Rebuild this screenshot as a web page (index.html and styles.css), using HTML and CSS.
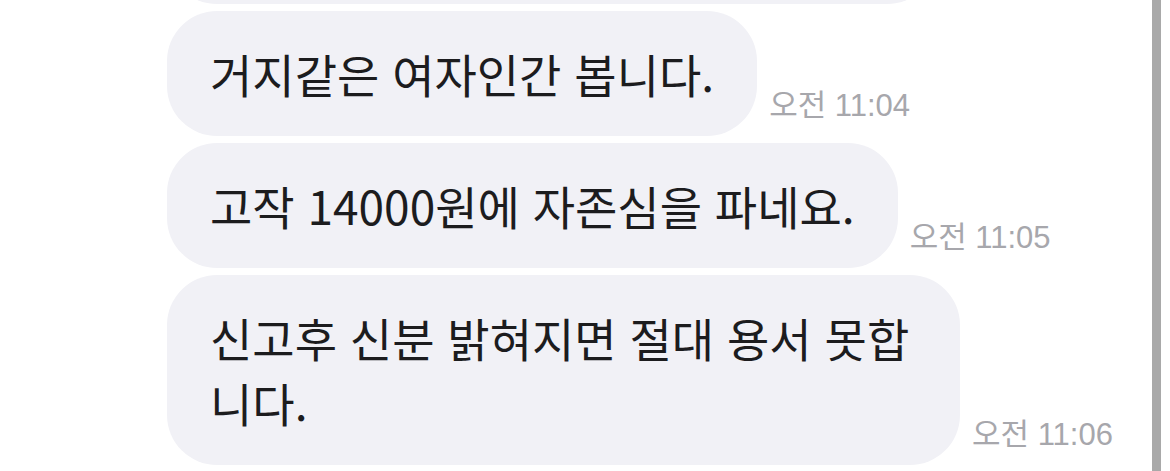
FILE: index.html
```html
<!DOCTYPE html>
<html lang="ko">
<head>
<meta charset="utf-8">
<link rel="stylesheet" href="styles.css">
</head>
<body>
<div class="screen">
  <div class="chat">
    <div class="row row-prev">
      <div class="bubble bubble-prev"></div>
    </div>
    <div class="row">
      <div class="bubble">거지같은 여자인간 봅니다.</div>
      <div class="time">오전 11:04</div>
    </div>
    <div class="row">
      <div class="bubble">고작 14000원에 자존심을 파네요.</div>
      <div class="time">오전 11:05</div>
    </div>
    <div class="row">
      <div class="bubble">신고후 신분 밝혀지면 절대 용서 못합니다.</div>
      <div class="time">오전 11:06</div>
    </div>
  </div>
  <div class="scrollbar"></div>
</div>
</body>
</html>
```

FILE: styles.css
```css
html, body {
  margin: 0;
  padding: 0;
  background: #ffffff;
}
.screen {
  display: flex;
  width: 1170px;
  height: 471px;
  overflow: hidden;
}
.chat {
  flex: 1;
  display: flex;
  flex-direction: column;
  gap: 7px;
  padding-left: 167px;
  overflow: hidden;
}
.row {
  display: flex;
  align-items: flex-end;
  gap: 12px;
}
.row-prev {
  margin-top: -121px;
}
.bubble {
  box-sizing: border-box;
  max-width: 793px;
  background: #f1f1f6;
  color: #1c1c1e;
  border-radius: 50px;
  padding: 30px 43px;
  font-family: "Noto Sans CJK KR", "Noto Sans", sans-serif;
  font-size: 46px;
  line-height: 65px;
}
.bubble-prev {
  width: 770px;
  height: 125px;
}
.time {
  flex: none;
  color: #a7a7ac;
  font-family: "Liberation Sans", "Noto Sans CJK KR", sans-serif;
  font-size: 31px;
  line-height: 31px;
  margin-bottom: 15px;
  white-space: nowrap;
}
.scrollbar {
  flex: none;
  width: 9px;
  background: #a9a9a9;
  margin-right: 9px;
}
```
